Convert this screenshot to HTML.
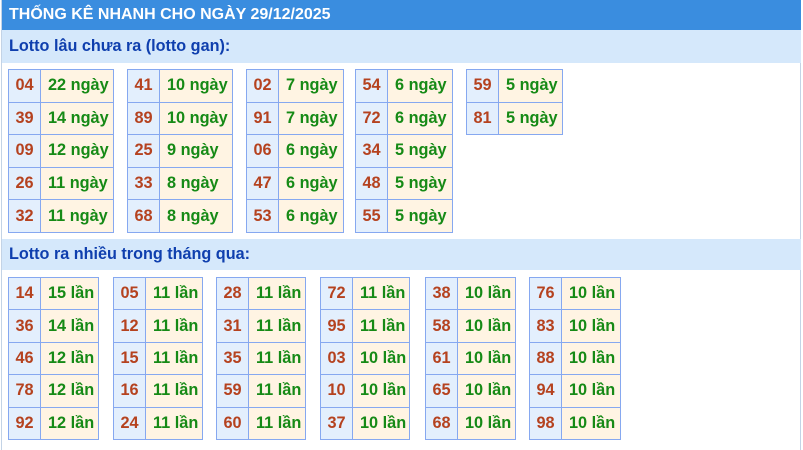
<!DOCTYPE html>
<html><head><meta charset="utf-8"><style>
*{margin:0;padding:0;box-sizing:border-box}
body{width:803px;height:450px;background:#fff;font-family:"Liberation Sans",Arial,sans-serif;position:relative;overflow:hidden}
.wrap{position:absolute;left:1px;top:0;width:800px;height:450px;border-right:1px solid #c3d3e6;border-left:1px solid #c3d3e6}
.h{position:absolute;left:0;top:0;width:799px;height:30px;background:#3a8ddf;color:#fff;font-weight:bold;font-size:16px;line-height:30px;padding-left:7px}
.s{position:absolute;left:0;width:799px;background:#d5e8fb;color:#0f3fae;font-weight:bold;font-size:16.2px;padding-left:7px}
table{position:absolute;border-collapse:collapse;font-weight:bold;font-size:16.3px}
td{border:1px solid #86a8f0;text-align:center;padding:0}
td.n{background:#e3effd;color:#b5421f;width:32px}
td.v{background:#fff4e3;color:#168a16;text-align:left;padding-left:7px}
.a td{height:32.6px}
.b td{height:32.4px}
</style></head><body>
<div class="wrap">
<div class="h">THỐNG KÊ NHANH CHO NGÀY 29/12/2025</div>
<div class="s" style="top:30px;height:33px;line-height:33px">Lotto lâu chưa ra (lotto gan):</div>
<div class="s" style="top:239px;height:31px;line-height:31px">Lotto ra nhiều trong tháng qua:</div>
</div>
<table class="a" style="left:8px;top:69px;width:106px"><tr><td class="n">04</td><td class="v">22 ngày</td></tr><tr><td class="n">39</td><td class="v">14 ngày</td></tr><tr><td class="n">09</td><td class="v">12 ngày</td></tr><tr><td class="n">26</td><td class="v">11 ngày</td></tr><tr><td class="n">32</td><td class="v">11 ngày</td></tr></table>
<table class="a" style="left:127px;top:69px;width:106px"><tr><td class="n">41</td><td class="v">10 ngày</td></tr><tr><td class="n">89</td><td class="v">10 ngày</td></tr><tr><td class="n">25</td><td class="v">9 ngày</td></tr><tr><td class="n">33</td><td class="v">8 ngày</td></tr><tr><td class="n">68</td><td class="v">8 ngày</td></tr></table>
<table class="a" style="left:246px;top:69px;width:98px"><tr><td class="n">02</td><td class="v">7 ngày</td></tr><tr><td class="n">91</td><td class="v">7 ngày</td></tr><tr><td class="n">06</td><td class="v">6 ngày</td></tr><tr><td class="n">47</td><td class="v">6 ngày</td></tr><tr><td class="n">53</td><td class="v">6 ngày</td></tr></table>
<table class="a" style="left:355px;top:69px;width:98px"><tr><td class="n">54</td><td class="v">6 ngày</td></tr><tr><td class="n">72</td><td class="v">6 ngày</td></tr><tr><td class="n">34</td><td class="v">5 ngày</td></tr><tr><td class="n">48</td><td class="v">5 ngày</td></tr><tr><td class="n">55</td><td class="v">5 ngày</td></tr></table>
<table class="a" style="left:466px;top:69px;width:97px"><tr><td class="n">59</td><td class="v">5 ngày</td></tr><tr><td class="n">81</td><td class="v">5 ngày</td></tr></table>

<table class="b" style="left:8px;top:277px;width:91px"><tr><td class="n">14</td><td class="v">15 lần</td></tr><tr><td class="n">36</td><td class="v">14 lần</td></tr><tr><td class="n">46</td><td class="v">12 lần</td></tr><tr><td class="n">78</td><td class="v">12 lần</td></tr><tr><td class="n">92</td><td class="v">12 lần</td></tr></table>
<table class="b" style="left:113px;top:277px;width:90px"><tr><td class="n">05</td><td class="v">11 lần</td></tr><tr><td class="n">12</td><td class="v">11 lần</td></tr><tr><td class="n">15</td><td class="v">11 lần</td></tr><tr><td class="n">16</td><td class="v">11 lần</td></tr><tr><td class="n">24</td><td class="v">11 lần</td></tr></table>
<table class="b" style="left:216px;top:277px;width:90px"><tr><td class="n">28</td><td class="v">11 lần</td></tr><tr><td class="n">31</td><td class="v">11 lần</td></tr><tr><td class="n">35</td><td class="v">11 lần</td></tr><tr><td class="n">59</td><td class="v">11 lần</td></tr><tr><td class="n">60</td><td class="v">11 lần</td></tr></table>
<table class="b" style="left:320px;top:277px;width:90px"><tr><td class="n">72</td><td class="v">11 lần</td></tr><tr><td class="n">95</td><td class="v">11 lần</td></tr><tr><td class="n">03</td><td class="v">10 lần</td></tr><tr><td class="n">10</td><td class="v">10 lần</td></tr><tr><td class="n">37</td><td class="v">10 lần</td></tr></table>
<table class="b" style="left:425px;top:277px;width:91px"><tr><td class="n">38</td><td class="v">10 lần</td></tr><tr><td class="n">58</td><td class="v">10 lần</td></tr><tr><td class="n">61</td><td class="v">10 lần</td></tr><tr><td class="n">65</td><td class="v">10 lần</td></tr><tr><td class="n">68</td><td class="v">10 lần</td></tr></table>
<table class="b" style="left:529px;top:277px;width:92px"><tr><td class="n">76</td><td class="v">10 lần</td></tr><tr><td class="n">83</td><td class="v">10 lần</td></tr><tr><td class="n">88</td><td class="v">10 lần</td></tr><tr><td class="n">94</td><td class="v">10 lần</td></tr><tr><td class="n">98</td><td class="v">10 lần</td></tr></table>
</body></html>
